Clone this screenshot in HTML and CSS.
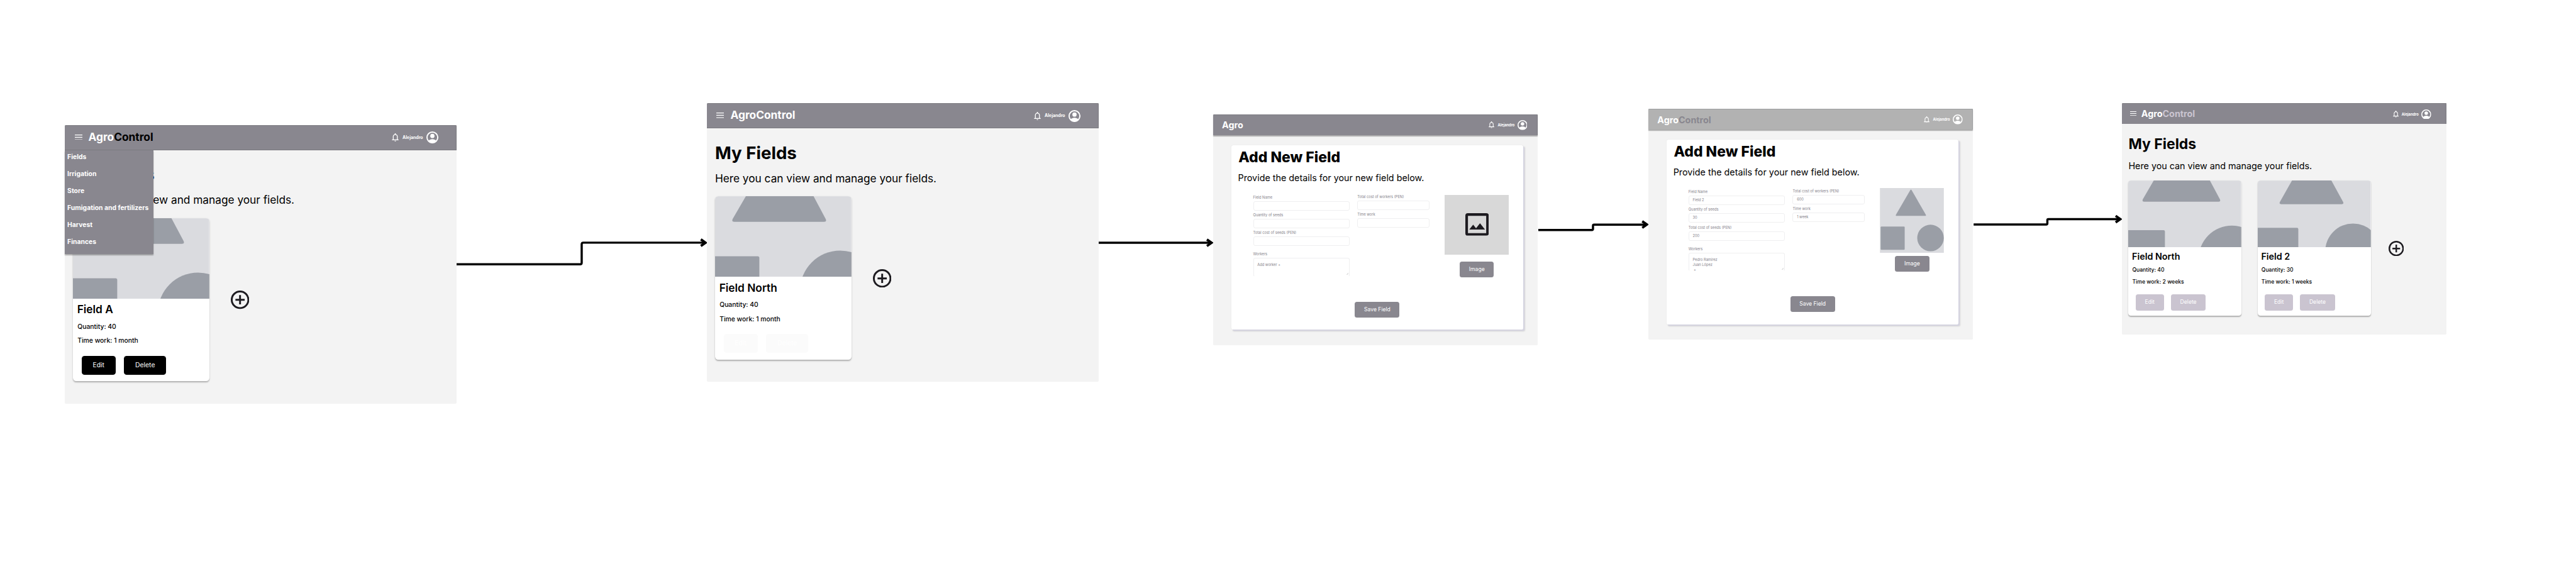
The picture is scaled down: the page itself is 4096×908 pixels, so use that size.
FILE: index.html
```
<!DOCTYPE html>
<html lang="en">
<head>
<meta charset="utf-8">
<title>AgroControl – field flow</title>
<link rel="stylesheet" href="styles.css">
</head>
<body>
<svg class="defs" aria-hidden="true">
  <symbol id="i-menu" viewBox="0 0 14 10"><path d="M0 .7h14M0 5h14M0 9.3h14" stroke="currentColor" stroke-width="1.4"/></symbol>
  <symbol id="i-bell" viewBox="4 2 16 20"><path fill="currentColor" d="M4 19v-2h2v-7c0-1.4.4-2.6 1.25-3.7S9.2 4.550 10.500 4.200V3.500c0-.4.15-.8.440-1.060S11.600 2 12 2s.8.150 1.060.440.440.640.440 1.060v.7c1.330.350 2.420 1.050 3.250 2.100S18 8.600 18 10v7h2v2zm8 3c-.55 0-1.020-.2-1.410-.59S10 20.550 10 20h4c0 .55-.2 1.020-.59 1.410S12.550 22 12 22m-4-5h8v-7c0-1.100-.39-2.040-1.170-2.830S13.100 6 12 6s-2.040.39-2.830 1.170S8 8.900 8 10z"/></symbol>
  <symbol id="i-user" viewBox="0 0 22 22"><circle cx="11" cy="11" r="9.900" fill="none" stroke="currentColor" stroke-width="2.200"/><circle cx="11" cy="8.300" r="3.900" fill="currentColor"/><path fill="currentColor" d="M3.800 17.300c1.800-2 4.400-3.200 7.200-3.200s5.400 1.200 7.200 3.200A9.900 9.900 0 0 1 11 21a9.900 9.900 0 0 1-7.200-3.700z"/></symbol>
  <symbol id="i-add" viewBox="0 0 34 34"><circle cx="17" cy="17" r="15.300" fill="none" stroke="currentColor" stroke-width="3.400"/><path d="M17 8.500v17M8.500 17h17" stroke="currentColor" stroke-width="3.400"/></symbol>
  <symbol id="i-image" viewBox="0 0 52 50"><rect x="2.900" y="2.900" width="46.200" height="44.200" rx="2.500" fill="none" stroke="currentColor" stroke-width="5.800"/><path fill="currentColor" d="M8.700 36.300 17.300 25.500l6.400 8L32.500 22.300l11 14z"/></symbol>
  <symbol id="p-wide" viewBox="0 0 251 148"><rect width="251" height="148" fill="#dadbdf"/><g fill="#9a9ea6"><path d="M56.700 0h124.600l22.200 41.500q2.500 5.500-3 5.500H35.500q-5.500 0-3-5.500z"/><path d="M0 110.300h78.500q3 0 3 3V148H0z"/><circle cx="230.300" cy="174" r="74"/></g></symbol>
  <symbol id="p-mid" viewBox="0 0 251 148"><rect width="251" height="148" fill="#dadbdf"/><g fill="#9a9ea6"><path d="M76 0h87.400l26 47.500q2.500 5-3 5H52.200q-5.500 0-3-5z"/><path d="M0 105h87q3 0 3 3v40H0z"/><circle cx="211.500" cy="157.200" r="61.700"/></g></symbol>
  <symbol id="p-full" viewBox="0 0 142 144"><rect width="142" height="144" fill="#dadbdf"/><g fill="#9a9ea6"><path d="M67.300 4.800q1.600-2.400 3.200 0L102 59.500q1 2.500-1.500 2.500H37q-2.500 0-1.500-2.500z"/><rect x="1.500" y="85.500" width="53.500" height="52" rx="2"/><circle cx="112.400" cy="111" r="29.500"/></g></symbol>
</svg>

<main class="board">
  <svg class="links" viewBox="0 0 4734 1049">
    <path d="M839 485.700H1066q3 0 3-3V449q0-3 3-3H1297"/>
    <path d="M2019 446.200H2227"/>
    <path d="M2827 422.800h98.500q2 0 2-2v-6q0-2 2-2H3027"/>
    <path d="M3627 412.700h133.500q2 0 2-2v-6q0-2 2-2H3897"/>
    <path class="tip" d="M1288 440l8.500 6-8.500 6M2218 440.200l8.500 6-8.500 6M3018 406.700l8.500 6-8.500 6M3888 396.700l8.500 6-8.500 6"/>
  </svg>

  <section class="screen s1">
    <header class="bar">
      <svg class="menu"><use href="#i-menu"/></svg><span class="logo">Agro<b class="black">Control</b></span>
      <svg class="bell"><use href="#i-bell"/></svg><span class="who">Alejandro</span><svg class="user"><use href="#i-user"/></svg>
    </header>
    <nav class="drawer"><a>Fields</a><a>Irrigation</a><a>Store</a><a>Fumigation and fertilizers</a><a>Harvest</a><a>Finances</a></nav>
    <h1>My Fields</h1>
    <p class="lead">Here you can view and manage your fields.</p>
    <div class="cards">
      <article class="card">
        <svg class="pic"><use href="#p-wide"/></svg>
        <h2>Field A</h2><p>Quantity: 40</p><p>Time work: 1 month</p>
        <div class="acts dark"><span class="btn">Edit</span><span class="btn">Delete</span></div>
      </article>
      <svg class="add"><use href="#i-add"/></svg>
    </div>
  </section>

  <section class="screen s2">
    <header class="bar">
      <svg class="menu"><use href="#i-menu"/></svg><span class="logo">AgroControl</span>
      <svg class="bell"><use href="#i-bell"/></svg><span class="who">Alejandro</span><svg class="user"><use href="#i-user"/></svg>
    </header>
    <h1>My Fields</h1>
    <p class="lead">Here you can view and manage your fields.</p>
    <div class="cards">
      <article class="card">
        <svg class="pic"><use href="#p-wide"/></svg>
        <h2>Field North</h2><p>Quantity: 40</p><p>Time work: 1 month</p>
        <div class="acts faint"><span class="btn">Edit</span><span class="btn">Delete</span></div>
      </article>
      <svg class="add"><use href="#i-add"/></svg>
    </div>
  </section>

  <section class="screen small s3">
    <header class="bar form-bar">
      <span class="logo">Agro</span>
      <svg class="bell"><use href="#i-bell"/></svg><span class="who">Alejandro</span><svg class="user"><use href="#i-user"/></svg>
    </header>
    <div class="sheet">
      <h1>Add New Field</h1>
      <p class="lead">Provide the details for your new field below.</p>
      <div class="form">
        <div class="col one">
          <label>Field Name</label><div class="input"></div>
          <label>Quantity of seeds</label><div class="input"></div>
          <label>Total cost of seeds (PEN)</label><div class="input"></div>
          <label class="gap">Workers</label><div class="area">Add worker +<svg class="grip" viewBox="0 0 4 4"><path d="M0 4 4 0M2 4l2-2"/></svg></div>
        </div>
        <div class="col two">
          <label>Total cost of workers (PEN)</label><div class="input"></div>
          <label>Time work</label><div class="input"></div>
        </div>
        <div class="col three">
          <div class="blank"><svg class="ico"><use href="#i-image"/></svg></div>
          <span class="btn">Image</span>
        </div>
      </div>
      <span class="btn save">Save Field</span>
    </div>
  </section>

  <section class="screen small s4">
    <header class="bar form-bar grey">
      <span class="logo">Agro<b class="slate">Control</b></span>
      <svg class="bell"><use href="#i-bell"/></svg><span class="who">Alejandro</span><svg class="user"><use href="#i-user"/></svg>
    </header>
    <div class="sheet">
      <h1>Add New Field</h1>
      <p class="lead">Provide the details for your new field below.</p>
      <div class="form">
        <div class="col one">
          <label>Field Name</label><div class="input">Field 2</div>
          <label>Quantity of seeds</label><div class="input">30</div>
          <label>Total cost of seeds (PEN)</label><div class="input">200</div>
          <label class="gap">Workers</label><div class="area">Pedro Ramírez<br>Juan López<br>&nbsp;+<svg class="grip" viewBox="0 0 4 4"><path d="M0 4 4 0M2 4l2-2"/></svg></div>
        </div>
        <div class="col two">
          <label>Total cost of workers (PEN)</label><div class="input">600</div>
          <label>Time work</label><div class="input">1 week</div>
        </div>
        <div class="col three">
          <svg class="shot"><use href="#p-full"/></svg>
          <span class="btn">Image</span>
        </div>
      </div>
      <span class="btn save">Save Field</span>
    </div>
  </section>

  <section class="screen small s5">
    <header class="bar flat">
      <svg class="menu"><use href="#i-menu"/></svg><span class="logo">Agro<b class="lilac">Control</b></span>
      <svg class="bell"><use href="#i-bell"/></svg><span class="who">Alejandro</span><svg class="user"><use href="#i-user"/></svg>
    </header>
    <h1>My Fields</h1>
    <p class="lead">Here you can view and manage your fields.</p>
    <div class="cards">
      <article class="card">
        <svg class="pic"><use href="#p-wide"/></svg>
        <h2>Field North</h2><p>Quantity: 40</p><p>Time work: 2 weeks</p>
        <div class="acts soft"><span class="btn">Edit</span><span class="btn">Delete</span></div>
      </article>
      <article class="card">
        <svg class="pic"><use href="#p-mid"/></svg>
        <h2>Field 2</h2><p>Quantity: 30</p><p>Time work: 1 weeks</p>
        <div class="acts soft"><span class="btn">Edit</span><span class="btn">Delete</span></div>
      </article>
      <svg class="add"><use href="#i-add"/></svg>
    </div>
  </section>
</main>
</body>
</html>
```
FILE: styles.css
```
* { box-sizing: border-box; }
body { margin: 0; background: #fff; overflow: hidden; font-family: Inter, "Liberation Sans", sans-serif; color: #000; }
h1, h2, p { margin: 0; }
svg { display: block; flex: none; }
.defs { position: absolute; width: 0; height: 0; }

/* Board units; screens are placed on a free canvas */
.board { position: relative; width: 4734px; height: 1049px; zoom: 0.86523; }
.links { position: absolute; left: 0; top: 0; width: 4734px; height: 1049px; fill: none; stroke: #000; stroke-width: 4; }
.links .tip { stroke-width: 4.5; }

.screen { position: absolute; width: 720px; height: 512px; background: #f3f3f3; border-radius: 2px; }
.small { zoom: 0.829; }
.s1 { left: 119px; top: 230px; }
.s2 { left: 1299px; top: 190px; }
.s3 { left: calc(2229.2px / 0.829); top: calc(210px / 0.829); }
.s4 { left: calc(3029.2px / 0.829); top: calc(200px / 0.829); }
.s5 { left: calc(3899.2px / 0.829); top: calc(190px / 0.829); }

.bar { display: flex; align-items: center; height: 46px; padding: 0 32.500px 0 18px; background: #89878f; border: 1px solid #7b7a80; border-left: 0; border-right-width: 0.500px; border-radius: 2px 2px 0 0; color: #fff; }
.bar.flat { border-bottom: 0; }
.form-bar { border-bottom: 0; padding: 0 22px 0 20px; box-shadow: 0 1.500px 2px rgba(0, 0, 0, 0.3); }
.grey { background: #b2b2b2; border-color: #9c9ea0; }
.menu { width: 14px; height: 10px; margin: 0 11.400px 2px 0; }
.logo { font-size: 20px; font-weight: 700; line-height: 24px; margin: 0 auto 2px 0; }
.form-bar .logo { margin-bottom: 0; padding-top: 1px; }
.logo b { font-weight: 700; }
.black { color: #000; }
.slate { color: #89878f; }
.lilac { color: #cac4d0; }
.bell { width: 12.800px; height: 15px; margin-right: 7px; }
.who { font-size: 8px; font-weight: 700; line-height: 10px; margin-right: 6px; }
.user { width: 22px; height: 22px; }

h1 { margin: 25px 0 0 15px; font-size: 32px; font-weight: 700; line-height: 40px; white-space: nowrap; }
.lead { margin: 15.400px 0 0 15px; font-size: 20px; line-height: 24px; letter-spacing: -0.030px; white-space: nowrap; }

.cards { display: flex; align-items: flex-start; gap: 35.700px; margin: 20.600px 0 0 15px; }
.card { width: 250.600px; height: 300px; border-radius: 6px; background: #fff; box-shadow: 0 2px 2.500px rgba(0, 0, 0, 0.28); }
.pic { width: 250.600px; height: 148px; border-radius: 6px 6px 0 0; }
.card h2 { margin: 8.400px 0 11.200px 7.800px; font-size: 20px; font-weight: 600; line-height: 24px; }
.card p { margin: 0 0 10px 8.400px; font-size: 12px; font-weight: 500; line-height: 16px; }
.acts { display: flex; gap: 16px; margin: 19.400px 0 0 16px; }
.btn { height: 35px; padding: 0 20.400px; border-radius: 5px; background: #89878f; color: #fff; font-size: 12px; line-height: 35px; white-space: nowrap; }
.dark .btn { background: #000; }
.faint .btn { background: #fbfbfb; }
.soft .btn { background: #cac4d0; }
.add { width: 34px; height: 34px; margin: 133.200px 0 0 3.600px; color: #1d1b20; }

.drawer { position: absolute; left: 0; top: 46px; width: 163px; height: 190.500px; padding-top: 2px; display: flex; flex-direction: column; background: #89878f; box-shadow: 0 2px 2px rgba(0, 0, 0, 0.3); z-index: 2; }
.drawer a { padding-left: 4.800px; height: 31.750px; color: #fff; font-size: 12px; font-weight: 700; line-height: 20px; white-space: nowrap; }

.sheet { display: flow-root; width: 647px; height: 409px; margin: 22.700px 0 0 40.900px; border-radius: 4px; background: #fff; box-shadow: 3px 3px 0 #d5d4e0, 3px 4px 3px rgba(0, 0, 0, 0.12), 0 0 2px rgba(0, 0, 0, 0.1); }
.sheet h1 { margin: 7px 0 0 15.500px; font-weight: 800; }
.sheet .lead { margin: 12.500px 0 0 14.500px; letter-spacing: 0; }
.form { display: grid; grid-template-columns: 213.700px 159.500px 142.300px; column-gap: 17.300px; height: 240px; margin: 23.800px 0 0 48px; }
.form .three { margin-left: 17px; width: 142.300px; }
.col { display: flex; flex-direction: column; }
.one { padding-top: 2.600px; }
.two { padding-top: 1.100px; }
label { font-size: 8px; line-height: 10px; margin-bottom: 4px; color: #85828a; white-space: nowrap; }
label.gap { margin-top: 8.100px; }
.input { height: 20.800px; margin-bottom: 4.600px; padding-left: 8px; border: 1px solid #efeff0; border-radius: 4px; font-size: 8px; line-height: 18px; color: #85828a; }
.area { position: relative; height: 41px; padding: 8.500px 0 0 8px; border: 1px solid #efeff0; border-bottom-color: #fff; border-radius: 4px; font-size: 8px; line-height: 11px; color: #85828a; }
.grip { position: absolute; right: 1px; bottom: 2px; width: 4px; height: 4px; stroke: #999; stroke-width: 0.600; }
.three { align-items: center; }
.blank { display: grid; place-items: center; width: 142.300px; height: 132.500px; margin: 2.500px 0 15.800px; background: #d8d8d8; }
.ico { width: 52px; height: 50px; color: #1d1b20; }
.shot { width: 142.300px; height: 143.600px; margin-bottom: 7.200px; }
.save { display: block; width: 99px; padding: 0; margin-left: 273.700px; text-align: center; }
```
